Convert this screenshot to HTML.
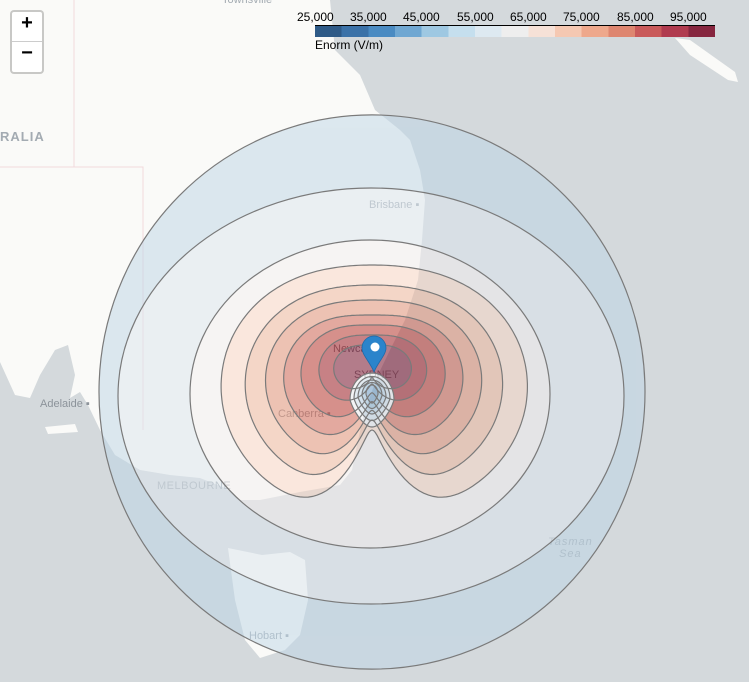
<!DOCTYPE html>
<html><head><meta charset="utf-8"><style>
html,body{margin:0;padding:0;width:749px;height:682px;overflow:hidden;background:#d4d9dc;font-family:"Liberation Sans",sans-serif}
svg{position:absolute;left:0;top:0}
.zoom{position:absolute;left:10px;top:10px;width:30px;height:60px;background:#fff;border:2px solid rgba(0,0,0,.2);border-radius:4px;background-clip:padding-box}
.zoom div{height:30px;line-height:30px;text-align:center;font:bold 20px "Liberation Sans",sans-serif;color:#000}
.zoom div:first-child{border-bottom:1px solid #ccc;height:29px}
.lbl{position:absolute;font-size:11px;color:#a3abb2;white-space:nowrap}
.leg{position:absolute;left:300px;top:10px;font-size:12px;color:#000}
</style></head><body>
<svg width="749" height="682">
<path fill="#fafaf8" d="M0,0 L330,0 L335,50 L360,75 L375,110 L400,130 L410,140 L420,170 L425,200 L422,240 L418,280 L405,320 L390,350 L378,375 L365,410 L358,440 L352,470 L340,485 L300,492 L260,500 L240,500 L225,488 L200,478 L170,475 L140,470 L115,455 L100,430 L88,405 L80,392 L70,398 L75,375 L68,345 L55,350 L40,375 L30,398 L15,395 L0,362 Z"/>
<path fill="#fafaf8" d="M45,427 L75,424 L78,432 L48,434 Z"/>
<path fill="#fafaf8" d="M228,548 L262,555 L290,552 L305,560 L308,600 L300,635 L285,650 L260,658 L245,640 L235,600 Z"/>
<path fill="#fafaf8" d="M675,38 L690,40 L735,72 L738,82 L728,80 L690,55 Z"/>
<path fill="none" stroke="#f1d9dd" stroke-width="1" d="M74,0 L74,167 L0,167 M74,167 L143,167 L143,430"/>
</svg>
<div class="lbl" style="left:222px;top:-6px">Townsville</div>
<div class="lbl" style="left:0;top:129px;font-size:13px;font-weight:bold;letter-spacing:1px">RALIA</div>
<div class="lbl" style="left:369px;top:199px;font-size:11px">Brisbane ▪</div>
<div class="lbl" style="left:333px;top:343px;font-size:11px;color:#8a8a90">Newcastle</div>
<div class="lbl" style="left:354px;top:369px;font-size:11px;color:#8a8a90">SYDNEY</div>
<div class="lbl" style="left:278px;top:408px;font-size:11px;color:#a0a4a8">Canberra ▪</div>
<div class="lbl" style="left:40px;top:398px;font-size:11px;color:#8c939a">Adelaide ▪</div>
<div class="lbl" style="left:157px;top:480px;font-size:11px;letter-spacing:.5px">MELBOURNE</div>
<div class="lbl" style="left:548px;top:536px;font-style:italic;letter-spacing:1px;text-align:center;line-height:12px">Tasman<br>Sea</div>
<div class="lbl" style="left:249px;top:630px;font-size:11px">Hobart ▪</div>
<svg width="749" height="682">
<g id="fills" opacity="0.5"></g>
<g id="lines" fill="none" stroke="#7a7a7a" stroke-width="1.2"></g>
<g transform="translate(374,372)">
<path d="M0,0 C-4,-10 -12,-17 -12,-24 A12,12 0 1 1 12,-24 C12,-17 4,-10 0,0 Z" fill="#2a84cb" stroke="#1f6aa8" stroke-width="0.8"/>
<circle cx="1" cy="-25" r="4.5" fill="#fff"/>
</g>
</svg>
<div class="zoom"><div>+</div><div>−</div></div>
<div class="leg">
<div style="position:absolute;left:0;top:0;width:440px;height:14px">
<span style="position:absolute;left:-3px">25,000</span><span style="position:absolute;left:50px">35,000</span><span style="position:absolute;left:103px">45,000</span><span style="position:absolute;left:157px">55,000</span><span style="position:absolute;left:210px">65,000</span><span style="position:absolute;left:263px">75,000</span><span style="position:absolute;left:317px">85,000</span><span style="position:absolute;left:370px">95,000</span></div>
<div style="position:absolute;left:15px;top:15px;width:400px;height:11px;border-top:1px solid #000;background:linear-gradient(90deg,#2e5a87 0 6.67%,#3b72a8 6.67% 13.33%,#4a8bc2 13.33% 20%,#6fa7d2 20% 26.67%,#9ec8e2 26.67% 33.33%,#c5dfee 33.33% 40%,#dde9f1 40% 46.67%,#eeeeee 46.67% 53.33%,#f6e1d7 53.33% 60%,#f5c8b2 60% 66.67%,#eea88c 66.67% 73.33%,#de8670 73.33% 80%,#c95a5a 80% 86.67%,#b03b4f 86.67% 93.33%,#86263f 93.33% 100%)"></div>
<div style="position:absolute;left:15px;top:28px;white-space:nowrap">Enorm (V/m)</div>
</div>
<script>
var F=document.getElementById('fills'),L=document.getElementById('lines'),NS='http://www.w3.org/2000/svg';
function add(d,c){var p=document.createElementNS(NS,'path');p.setAttribute('d',d);p.setAttribute('fill',c);F.appendChild(p);var q=document.createElementNS(NS,'path');q.setAttribute('d',d);L.appendChild(q);}
function ell(cx,cy,rx,ry){return 'M'+(cx-rx)+','+cy+' a'+rx+','+ry+' 0 1 0 '+(2*rx)+',0 a'+rx+','+ry+' 0 1 0 '+(-2*rx)+',0 Z';}
function egg(cx,cy,rx,ry){var s='';for(var i=0;i<=72;i++){var t=i/72*2*Math.PI,y=-Math.cos(t),x=Math.sin(t)*(y>0?1-0.35*y:1);s+=(i?'L':'M')+(cx+rx*x).toFixed(1)+','+(cy+ry*y).toFixed(1);}return s+'Z';}
function heart(T,S,Bt,d,w){var cx=372,cy=372,B=(T-Bt)/2,AC=(T+Bt)/2,A=(AC+S)/2,C=(AC-S)/2,s='';
for(var i=0;i<=240;i++){var t=i/240*2*Math.PI,r=A+B*Math.cos(t)+C*Math.cos(2*t),dt=t-Math.PI;r*=1-d*Math.exp(-(dt*dt)/(w*w));
var x=cx+r*Math.sin(t)*(t<Math.PI?1.03:1),y=cy-r*Math.cos(t);s+=(i?'L':'M')+x.toFixed(1)+','+y.toFixed(1);}return s+'Z';}
add(ell(372,392,273,277),'rgb(190,214,230)');
add(ell(371,396,253,208),'rgb(220,230,238)');
add(ell(370,394,180,154),'rgb(244,240,240)');
var H=[[107,150,145,0.6,0.3,'rgb(250,214,196)'],[87,126,120,0.6,0.32,'rgb(240,180,152)'],[72,106,96,0.6,0.34,'rgb(226,140,112)'],[57,88,74,0.6,0.38,'rgb(206,90,72)'],[47,71,52,0.6,0.42,'rgb(180,40,32)'],[37,53,30,0.6,0.45,'rgb(150,10,20)'],[27,38,14,0.6,0.5,'rgb(110,0,30)']];
H.forEach(function(h){add(heart(h[0],h[1],h[2],h[3],h[4]),h[5]);});
var P=[[22,27,'rgb(238,240,244)'],[18,22,'rgb(205,222,236)'],[14,17,'rgb(175,204,228)'],[10,13,'rgb(140,182,214)'],[6,9,'rgb(100,150,195)']];
P.forEach(function(p,i){add(egg(372,400-i*1.5,p[0],p[1]),p[2]);});
</script>
</body></html>
